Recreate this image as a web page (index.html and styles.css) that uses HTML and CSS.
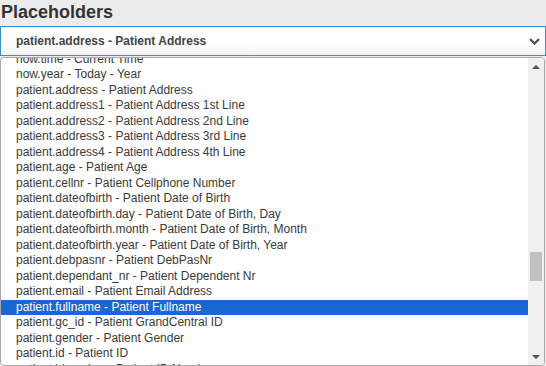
FILE: index.html
```html
<!DOCTYPE html>
<html>
<head>
    <link rel="stylesheet" href="styles.css">
</head>
<body>
    <h2 class="title">Placeholders</h2>

    <!-- Campo selecionado -->
    <div class="select">
        <span class="select-value">patient.address - Patient Address</span>
        <svg class="chevron" width="11" height="7" viewBox="0 0 11 7">
            <path d="M1 1l4.5 4.5L10 1" fill="none" stroke="#555" stroke-width="2.4"/>
        </svg>
    </div>

    <!-- Lista aberta -->
    <div class="listbox">
        <div class="options">
            <div class="options-inner">
                <div class="option">now.time - Current Time</div>
                <div class="option">now.year - Today - Year</div>
                <div class="option">patient.address - Patient Address</div>
                <div class="option">patient.address1 - Patient Address 1st Line</div>
                <div class="option">patient.address2 - Patient Address 2nd Line</div>
                <div class="option">patient.address3 - Patient Address 3rd Line</div>
                <div class="option">patient.address4 - Patient Address 4th Line</div>
                <div class="option">patient.age - Patient Age</div>
                <div class="option">patient.cellnr - Patient Cellphone Number</div>
                <div class="option">patient.dateofbirth - Patient Date of Birth</div>
                <div class="option">patient.dateofbirth.day - Patient Date of Birth, Day</div>
                <div class="option">patient.dateofbirth.month - Patient Date of Birth, Month</div>
                <div class="option">patient.dateofbirth.year - Patient Date of Birth, Year</div>
                <div class="option">patient.debpasnr - Patient DebPasNr</div>
                <div class="option">patient.dependant_nr - Patient Dependent Nr</div>
                <div class="option">patient.email - Patient Email Address</div>
                <div class="option selected">patient.fullname - Patient Fullname</div>
                <div class="option">patient.gc_id - Patient GrandCentral ID</div>
                <div class="option">patient.gender - Patient Gender</div>
                <div class="option">patient.id - Patient ID</div>
                <div class="option">patient.idnumber - Patient ID Number</div>
                <div class="option">patient.initials - Patient Initials</div>
            </div>
        </div>
        <div class="scrollbar">
            <div class="arrow up"></div>
            <div class="track">
                <div class="thumb"></div>
            </div>
            <div class="arrow down"></div>
        </div>
    </div>
</body>
</html>
```

FILE: styles.css
```css
body {
    margin: 0;
    background: #ececec;
    font-family: Arial, "Liberation Sans", sans-serif;
    color: #333;
    overflow: hidden;
}
.title {
    margin: 0;
    padding: 2px 0 0 1px;
    height: 24px;
    font-size: 18px;
    line-height: 21px;
    font-weight: bold;
    color: #333;
}
.select {
    height: 28px;
    border: 1px solid #3d8fcb;
    background: linear-gradient(#ffffff, #ffffff 55%, #f4f4f4);
    display: flex;
    align-items: center;
    justify-content: space-between;
    padding: 0 5px 0 15px;
}
.select-value {
    font-size: 12px;
    font-weight: bold;
    color: #444;
}
.chevron {
    margin-top: 1px;
}
.listbox {
    height: 307px;
    width: 543px;
    margin-top: 1px;
    border: 1px solid #a8a8a8;
    border-radius: 4px;
    background: #fff;
    display: flex;
    overflow: hidden;
}
.options {
    flex: 1;
    overflow: hidden;
}
.options-inner {
    margin-top: -6.25px;
}
.option {
    height: 15.5px;
    line-height: 15.5px;
    padding-left: 15px;
    font-size: 12px;
    color: #3a3a3a;
    white-space: nowrap;
}
.option.selected {
    background: #1967d2;
    color: #fff;
}
.scrollbar {
    width: 16px;
    background: #f0f0f0;
    display: flex;
    flex-direction: column;
}
.arrow {
    height: 17px;
    display: flex;
    align-items: center;
    justify-content: center;
}
.arrow::after {
    content: "";
    border-left: 4px solid transparent;
    border-right: 4px solid transparent;
}
.arrow.up::after {
    border-bottom: 4px solid #505050;
}
.arrow.down::after {
    border-top: 4px solid #505050;
}
.track {
    flex: 1;
    padding: 177px 2px 0 2px;
}
.thumb {
    height: 29px;
    background: #c1c1c1;
}
```
